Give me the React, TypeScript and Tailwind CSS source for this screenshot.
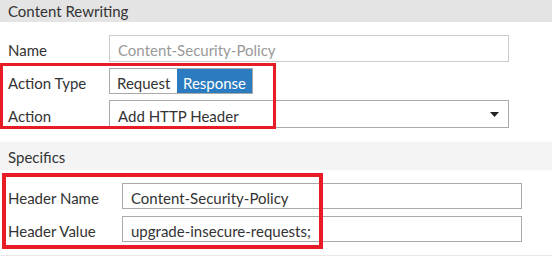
export default function App() {
  return (
    <div className="relative w-[552px] h-[257px] bg-white text-[#333] font-['Lato',sans-serif] text-[15px] overflow-hidden">
      {/* Content Rewriting section */}
      <div className="h-[22px] bg-[#e4e4e4] pl-2 pt-[1px] flex items-center leading-none">Content Rewriting</div>

      <div className="flex flex-col pt-[13px]">
        <div className="flex items-center h-[27px]">
          <div className="w-[109px] pl-2 pt-[4px]">Name</div>
          <div className="w-[400px] h-full border border-[#cccccc] flex items-center pl-2 pt-[4px] text-[#999]">
            Content-Security-Policy
          </div>
        </div>

        <div className="flex items-center h-[26px] mt-[6px]">
          <div className="w-[109px] pl-2 pt-[4px]">Action Type</div>
          <div className="flex h-full border border-[#aaaaaa]">
            <div className="w-[67px] flex items-center pl-[7px] pt-[4px] bg-white">Request</div>
            <div className="w-[75px] flex items-center pl-[6px] pt-[4px] bg-[#2b7bc0] text-white">Response</div>
          </div>
        </div>

        <div className="flex items-center h-[28px] mt-[6px]">
          <div className="w-[109px] pl-2 pt-[4px]">Action</div>
          <div className="w-[400px] h-full border border-[#aaaaaa] flex items-center justify-between pl-2 pr-[9px]">
            <span className="pt-[4px]">Add HTTP Header</span>
            <svg width="9" height="5" viewBox="0 0 9 5">
              <path d="M0 0h9L4.5 5z" fill="#222" />
            </svg>
          </div>
        </div>
      </div>

      {/* Specifics section */}
      <div className="h-[28px] mt-[14px] bg-[#f4f4f4] pl-2 pt-[2px] flex items-center">Specifics</div>

      <div className="flex flex-col pt-[13px]">
        <div className="flex items-center h-[26px]">
          <div className="w-[122px] pl-2 pt-[4px]">Header Name</div>
          <div className="w-[400px] h-full border border-[#aaaaaa] flex items-center pl-2 pt-[4px]">Content-Security-Policy</div>
        </div>
        <div className="flex items-center h-[26px] mt-[7px]">
          <div className="w-[122px] pl-2 pt-[4px]">Header Value</div>
          <div className="w-[400px] h-full border border-[#aaaaaa] flex items-center pl-2 pt-[4px]">upgrade-insecure-requests;</div>
        </div>
      </div>
      <div className="mt-[13px] h-px bg-[#e8e8e8]" />

      {/* highlight boxes */}
      <div className="absolute left-0 top-[63px] w-[276px] h-[66px] border-[3px] border-[#e81c25] pointer-events-none" />
      <div className="absolute left-[2px] top-[173px] w-[321px] h-[76px] border-[4px] border-[#e81c25] pointer-events-none" />
    </div>
  );
}
